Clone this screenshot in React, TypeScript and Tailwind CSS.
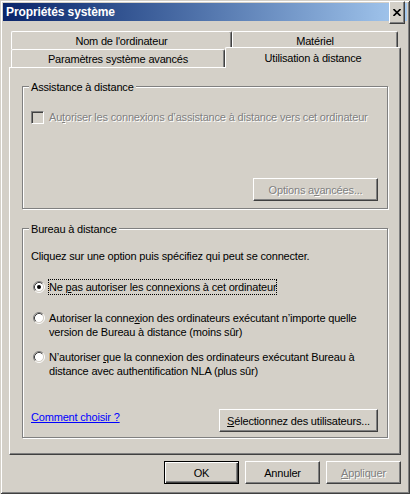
import React from 'react';

const btn =
    'flex items-center justify-center h-[23px] bg-[#d4d0c8] border-t border-l border-r border-b border-t-white border-l-white border-r-[#404040] border-b-[#404040] shadow-[inset_-1px_-1px_0_#808080]';
const tab =
    'flex items-center justify-center h-[18px] bg-[#d4d0c8] border-t border-l border-r border-t-white border-l-white border-r-[#404040] shadow-[inset_-1px_0_0_#808080] rounded-t-[2px]';
const disabled = 'text-[#808080] [text-shadow:1px_1px_0_#fff]';

function Radio({ checked = false }: { checked?: boolean }) {
    return (
        <svg width="12" height="12" viewBox="0 0 12 12" className="shrink-0 mt-[2px]">
            <circle cx="6" cy="6" r="4.5" fill="#fff" />
            <path d="M2.11 9.89 A5.5 5.5 0 0 1 9.89 2.11" fill="none" stroke="#808080" />
            <path d="M9.89 2.11 A5.5 5.5 0 0 1 2.11 9.89" fill="none" stroke="#fff" />
            <path d="M2.82 9.18 A4.5 4.5 0 0 1 9.18 2.82" fill="none" stroke="#404040" />
            <path d="M9.18 2.82 A4.5 4.5 0 0 1 2.82 9.18" fill="none" stroke="#d4d0c8" />
            {checked && <circle cx="6" cy="6" r="2" fill="#000" />}
        </svg>
    );
}

function Group({ title, className, children }: { title: string; className: string; children: React.ReactNode }) {
    return (
        <div className={`relative w-[366px] border border-[#808080] shadow-[inset_1px_1px_0_#fff,1px_1px_0_#fff] ${className}`}>
            <span className="absolute left-[6px] -top-[7px] px-[2px] bg-[#d4d0c8]">{title}</span>
            {children}
        </div>
    );
}

export default function App() {
    return (
        <div className="w-[410px] h-[494px] bg-[#d4d0c8] p-[3px] shadow-[inset_1px_1px_0_#d4d0c8,inset_-1px_-1px_0_#404040,inset_2px_2px_0_#fff,inset_-2px_-2px_0_#808080] font-['Liberation_Sans',Arial,sans-serif] text-[11px] leading-[14px] tracking-[-0.18px] text-black">
            {/* Title bar */}
            <div className="h-[18px] flex items-center justify-between bg-linear-to-r from-[#0a246a] to-[#a6caf0] pl-[3px] pr-[2px]">
                <span className="text-white font-bold text-[12px] tracking-[-0.1px]">Propriétés système</span>
                <button className={`${btn} w-[16px] h-[14px]`}>
                    <svg width="8" height="7" viewBox="0 0 8 7">
                        <path d="M0.5 0 L7.5 7 M7.5 0 L0.5 7" stroke="#000" strokeWidth="1.6" />
                    </svg>
                </button>
            </div>

            <div className="pt-[10px] px-[6px]">
                {/* Tabs */}
                <div className="flex h-[18px] ml-[2px]">
                    <div className={`${tab} w-[221px]`}>Nom de l'ordinateur</div>
                    <div className={`${tab} w-[166px]`}>Matériel</div>
                </div>
                <div className="flex items-end h-[18px] ml-[2px]">
                    <div className={`${tab} w-[214px]`}>Paramètres système avancés</div>
                    <div className={`${tab} relative z-10 w-[176px] h-[21px] -mb-[1px] pb-[1px]`}>Utilisation à distance</div>
                </div>

                {/* Panel */}
                <div className="w-[392px] h-[388px] border-t border-l border-r border-b border-t-white border-l-white border-r-[#404040] border-b-[#404040] shadow-[inset_-1px_-1px_0_#808080] pl-[12px] pt-[18px]">
                    <Group title="Assistance à distance" className="h-[123px] pl-[8px] pr-[9px] pt-[23px]">
                        <div className="flex items-center gap-[5px]">
                            <div className="shrink-0 w-[13px] h-[13px] border-t border-l border-r border-b border-t-[#808080] border-l-[#808080] border-r-white border-b-white shadow-[inset_1px_1px_0_#404040,inset_-1px_-1px_0_#d4d0c8] bg-[#d4d0c8]" />
                            <span className={`${disabled} whitespace-nowrap`}>
                                Au<u>t</u>oriser les connexions d’assistance à distance vers cet ordinateur
                            </span>
                        </div>
                        <div className="flex justify-end mt-[54px]">
                            <button className={`${btn} w-[125px] ${disabled}`}>
                                <span>Options a<u>v</u>ancées...</span>
                            </button>
                        </div>
                    </Group>

                    <Group title="Bureau à distance" className="mt-[19px] h-[210px] pl-[8px] pr-[9px] pt-[20px]">
                        <p>Cliquez sur une option puis spécifiez qui peut se connecter.</p>
                        <div className="flex items-start gap-[3px] ml-[2px] mt-[16px]">
                            <Radio checked />
                            <span className="border border-dotted border-black">
                                Ne <u>p</u>as autoriser les connexions à cet ordinateur
                            </span>
                        </div>
                        <div className="flex items-start gap-[3px] ml-[2px] mt-[15px]">
                            <Radio />
                            <span className="border border-transparent whitespace-nowrap">
                                Autoriser la conne<u>x</u>ion des ordinateurs exécutant n’importe quelle
                                <br />
                                version de Bureau à distance (moins sûr)
                            </span>
                        </div>
                        <div className="flex items-start gap-[3px] ml-[2px] mt-[9px]">
                            <Radio />
                            <span className="border border-transparent whitespace-nowrap">
                                N’autoriser <u>q</u>ue la connexion des ordinateurs exécutant Bureau à
                                <br />
                                distance avec authentification NLA (plus sûr)
                            </span>
                        </div>
                        <div className="flex items-start justify-between mt-[30px]">
                            <a className="mt-[1px] text-[#0000ff] underline">Comment choisir ?</a>
                            <button className={`${btn} w-[159px]`}>
                                <span><u>S</u>électionnez des utilisateurs...</span>
                            </button>
                        </div>
                    </Group>
                </div>

                {/* Dialog buttons */}
                <div className="flex justify-end gap-[6px] mt-[6px] w-[392px]">
                    <button className="flex items-center justify-center w-[75px] h-[23px] bg-[#d4d0c8] border border-black shadow-[inset_1px_1px_0_#fff,inset_-1px_-1px_0_#404040,inset_-2px_-2px_0_#808080]">
                        OK
                    </button>
                    <button className={`${btn} w-[75px]`}>Annuler</button>
                    <button className={`${btn} w-[75px] ${disabled}`}>
                        <span><u>A</u>ppliquer</span>
                    </button>
                </div>
            </div>
        </div>
    );
}
